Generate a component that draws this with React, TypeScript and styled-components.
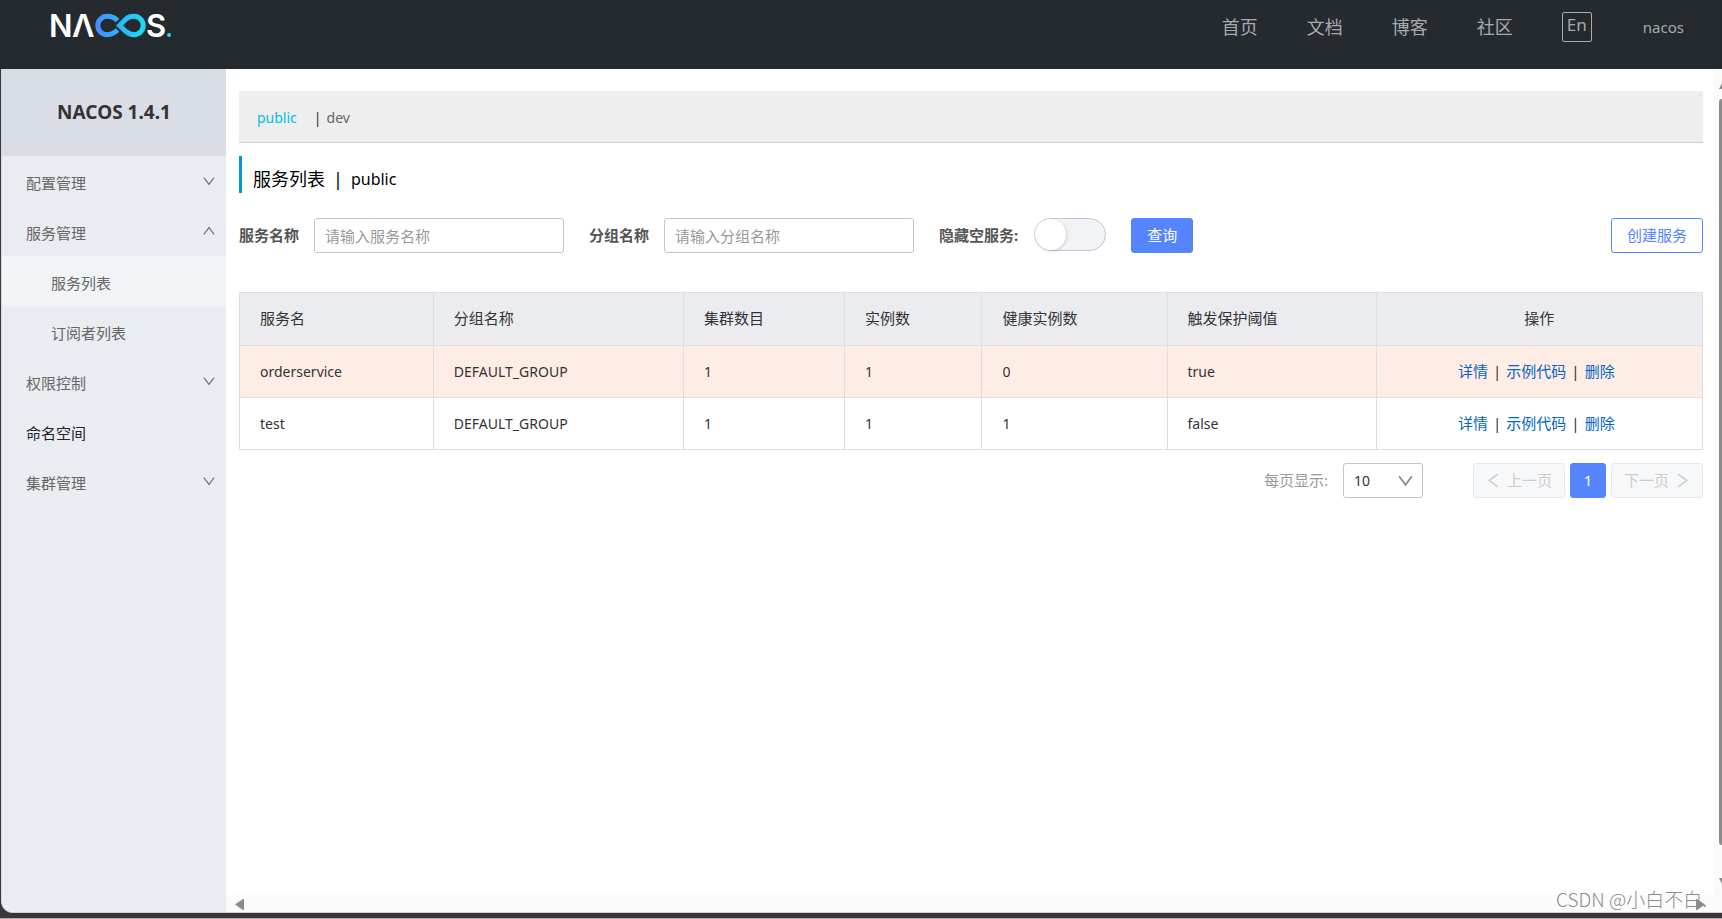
import React, { useState } from "react";
import styled, { createGlobalStyle } from "styled-components";

const GlobalStyle = createGlobalStyle`
  *, *::before, *::after { box-sizing: border-box; }
  body {
    margin: 0;
    background: #36383d;
    color: #333;
    font-family: "Noto Sans", "Noto Sans CJK SC", sans-serif;
    font-size: 15px;
    line-height: 20px;
  }
  button, input, select { font: inherit; }
  a { text-decoration: none; }
`;

const Page = styled.div`
  position: relative;
  display: flex;
  flex-direction: column;
  min-height: 100vh;
  padding-bottom: 5px;
  border-bottom: 1px solid #b5aaa9;
`;

const Header = styled.header`
  display: flex;
  justify-content: space-between;
  align-items: flex-start;
  height: 69px;
  padding: 4px 38px 0 48px;
  background: #252a2f;
`;

const LogoLink = styled.a`
  display: block;
  height: 44px;
`;

const TopNav = styled.nav`
  display: flex;
  align-items: center;
  gap: 49px;
  height: 30px;
  margin-top: 8px;
  font-size: 18px;
`;

const TopLink = styled.a`
  color: #a8aaac;
`;

const UserLink = styled(TopLink)`
  margin-left: 2px;
  font-size: 15px;
`;

const LanguageButton = styled.button`
  width: 30px;
  height: 30px;
  padding: 0 0 4px;
  border: 1px solid #a8aaac;
  border-radius: 2px;
  background: transparent;
  color: #a8aaac;
  font-size: 17px;
  line-height: 24px;
`;

const Body = styled.div`
  display: flex;
  flex: 1;
  margin-left: 1px;
  border-left: 1px solid #d5d8dc;
  border-bottom: 1px solid #cfcfd2;
  border-bottom-left-radius: 12px;
  background: #fff;
  overflow: hidden;
`;

const Sidebar = styled.aside`
  flex: 0 0 224px;
  background: #e9edf2;
`;

const Version = styled.h1`
  height: 87px;
  margin: 0;
  background: #d9dde5;
  font-size: 19px;
  line-height: 86px;
  text-align: center;
`;

const Menu = styled.ul`
  margin: 0;
  padding: 0;
  list-style: none;
`;

const menuEntry = `
  display: flex;
  align-items: center;
  justify-content: space-between;
  width: 100%;
  height: 50px;
  border: 0;
  text-align: left;
`;

const MenuButton = styled.button`
  ${menuEntry}
  padding: 4px 11px 0 24px;
  background: transparent;
  color: #666;

  svg { margin-bottom: 4px; }
`;

const MenuLink = styled.a<{ $nested?: boolean; $active?: boolean }>`
  ${menuEntry}
  padding: 4px 12px 0 ${(p) => (p.$nested ? 49 : 24)}px;
  background: ${(p) => (p.$active ? "#f1f3f7" : "transparent")};
  color: ${(p) => (p.$nested ? "#666" : "#222")};
`;

const Main = styled.main`
  display: flex;
  flex-direction: column;
  flex: 1;
  min-width: 0;
`;

const Content = styled.div`
  flex: 1;
  padding: 22px 11px 0 13px;
`;

const NamespaceBar = styled.div`
  display: flex;
  align-items: center;
  height: 52px;
  padding: 3px 18px 0;
  border-bottom: 1px solid #ccc;
  background: #eee;
  font-size: 14px;
`;

const NamespaceButton = styled.button<{ $active?: boolean }>`
  padding: 0;
  border: 0;
  background: transparent;
  color: ${(p) => (p.$active ? "#00c1de" : "#666")};
`;

const Divider = styled.span<{ $before: number; $after: number }>`
  margin-left: ${(p) => p.$before}px;
  margin-right: ${(p) => p.$after}px;
`;

const PageTitle = styled.h2`
  display: flex;
  align-items: center;
  height: 37px;
  margin: 13px 0 25px;
  padding: 9px 0 0 11px;
  border-left: 3px solid #09c;
  color: #000;
  font-size: 18px;
  font-weight: 400;
`;

const TitleScope = styled.span`
  font-size: 16px;
`;

const Filters = styled.form`
  display: flex;
  align-items: center;
  height: 35px;
`;

const FieldLabel = styled.label`
  margin-right: 15px;
  padding-bottom: 2px;
  color: #555;
  font-weight: 700;
`;

const TextInput = styled.input`
  width: 250px;
  height: 35px;
  margin-right: 25px;
  padding: 0 10px;
  border: 1px solid #c4c6cf;
  border-radius: 3px;
  background: #fff;
  color: #333;

  &::placeholder { color: #999; opacity: 1; }
`;

const Switch = styled.input`
  appearance: none;
  width: 72px;
  height: 33px;
  margin: 0 25px 2px 1px;
  border: 1px solid #c4c6cf;
  border-radius: 17px;
  background: #f2f3f7;

  &::before {
    content: "";
    display: block;
    width: 31px;
    height: 31px;
    border-radius: 50%;
    background: #fff;
    box-shadow: 1px 1px 3px rgba(0, 0, 0, 0.15);
  }

  &:checked { background: #5584ff; }
  &:checked::before { margin-left: 39px; }
`;

const ActionButton = styled.button<{ $outlined?: boolean }>`
  height: 35px;
  margin-left: ${(p) => (p.$outlined ? "auto" : "0")};
  padding: 0 15px 1px;
  border: 1px solid #5584ff;
  border-radius: 3px;
  background: ${(p) => (p.$outlined ? "#fff" : "#5584ff")};
  color: ${(p) => (p.$outlined ? "#5584ff" : "#fff")};
`;

const ServiceTable = styled.table`
  width: 100%;
  margin-top: 39px;
  border-collapse: collapse;
  table-layout: fixed;
`;

const Column = styled.col<{ $share?: number }>`
  width: ${(p) => (p.$share ? `${p.$share}%` : "auto")};
`;

const HeadCell = styled.th<{ $centered?: boolean }>`
  height: 53px;
  padding: 0 20px 2px;
  border: 1px solid #dcdee3;
  background: #ebecf0;
  font-weight: 400;
  text-align: ${(p) => (p.$centered ? "center" : "left")};
`;

const ServiceRow = styled.tr<{ $warning?: boolean }>`
  background: ${(p) => (p.$warning ? "#ffece4" : "#fff")};
`;

const Cell = styled.td`
  height: 52px;
  padding: 0 20px;
  border: 1px solid #dcdee3;
  font-size: 14px;
`;

const ActionCell = styled(Cell)`
  padding: 0 26px 2px 20px;
  font-size: 15px;
  text-align: center;
`;

const RowLink = styled.a`
  color: #06c;
`;

const RowDivider = styled.span`
  margin: 0 5px;
`;

const Footer = styled.div`
  display: flex;
  justify-content: flex-end;
  align-items: center;
  margin-top: 13px;
`;

const SizeLabel = styled.label`
  margin-right: 15px;
  padding-bottom: 1px;
  color: #999;
`;

const SelectBox = styled.div`
  display: grid;
  align-items: center;
  margin-right: 50px;

  > * { grid-area: 1 / 1; }
  svg { justify-self: end; margin-right: 10px; pointer-events: none; }
`;

const SizeSelect = styled.select`
  appearance: none;
  width: 80px;
  height: 35px;
  padding: 0 10px;
  border: 1px solid #c4c6cf;
  border-radius: 3px;
  background: #fff;
  color: #333;
  font-size: 14px;
`;

const Pager = styled.nav`
  display: flex;
  gap: 5px;
`;

const PageButton = styled.button<{ $current?: boolean }>`
  display: flex;
  align-items: center;
  justify-content: center;
  gap: 6px;
  width: ${(p) => (p.$current ? 36 : 92)}px;
  height: 35px;
  padding: 0 0 1px;
  border: 1px solid ${(p) => (p.$current ? "#5584ff" : "#e6e7eb")};
  border-radius: 3px;
  background: ${(p) => (p.$current ? "#5584ff" : "#f7f8fa")};
  color: ${(p) => (p.$current ? "#fff" : "#ccc")};
`;

const HorizontalTrack = styled.div`
  display: flex;
  align-items: center;
  justify-content: space-between;
  height: 17px;
  padding: 2px 9px 0;
  background: #fbfbfb;
`;

const VerticalTrack = styled.div`
  display: flex;
  flex-direction: column;
  align-items: flex-end;
  flex: 0 0 8px;
  padding: 14px 0 28px;
  background: #fafafa;
`;

const VerticalThumb = styled.div`
  flex: 1;
  width: 3px;
  margin: 10px 0 33px;
  border-radius: 3px 0 0 3px;
  background: #8b8b8b;
`;

const Watermark = styled.div`
  position: absolute;
  right: 15px;
  bottom: 6px;
  color: #8a8b8e;
  font-family: "Noto Sans CJK SC", sans-serif;
  font-size: 19px;
  font-weight: 300;
  line-height: 26px;
`;

function Logo() {
  return (
    <svg width="126" height="44" viewBox="-2 -8 126 44" role="img" aria-label="NACOS">
      <defs>
        <linearGradient id="loop" gradientUnits="userSpaceOnUse" x1="46" y1="0" x2="96" y2="0">
          <stop offset="0" stopColor="#428dff" />
          <stop offset="1" stopColor="#18dff5" />
        </linearGradient>
      </defs>
      <g fill="#fff" fontFamily="Inter, sans-serif" fontSize="31" fontWeight="600">
        <text x="-1" y="25">N</text>
        <text x="22" y="25">Λ</text>
        <text x="96" y="25">S</text>
      </g>
      <g fill="none" stroke="url(#loop)" strokeWidth="5">
        <path d="M67.5 8.5C64 5 61 4.300 57 4.300A9.200 9.200 0 0 0 57 22.700C61 22.700 64 21.500 67.500 18" />
        <path d="M69.500 13.500L76 7C78.500 5 81 4.300 84 4.300A9.200 9.200 0 0 1 84 22.700C81 22.700 78.500 21.500 76 19.500Z" />
      </g>
      <circle cx="119" cy="23" r="2" fill="#18dff5" />
    </svg>
  );
}

type Direction = "up" | "down" | "left" | "right";

const chevrons: Record<Direction, string> = {
  down: "M1 3L7 11L13 3",
  up: "M1 11L7 3L13 11",
  left: "M11 1L3 7L11 13",
  right: "M3 1L11 7L3 13",
};

function Chevron({ direction, size, color }: { direction: Direction; size: number; color: string }) {
  return (
    <svg width={size} height={size} viewBox="0 0 14 14" aria-hidden="true">
      <path d={chevrons[direction]} fill="none" stroke={color} strokeWidth="1.5" />
    </svg>
  );
}

function ScrollArrow({ width, height, points }: { width: number; height: number; points: string }) {
  return (
    <svg width={width} height={height} viewBox={`0 0 ${width} ${height}`} aria-hidden="true">
      <polygon points={points} fill="#8b8b8b" />
    </svg>
  );
}

const topLinks = ["首页", "文档", "博客", "社区"];

const columns = [
  { title: "服务名", share: 13.25 },
  { title: "分组名称", share: 17.1 },
  { title: "集群数目", share: 11 },
  { title: "实例数", share: 9.4 },
  { title: "健康实例数", share: 12.65 },
  { title: "触发保护阈值", share: 14.3 },
];

const services = [
  { name: "orderservice", group: "DEFAULT_GROUP", clusters: 1, instances: 1, healthy: 0, triggered: true },
  { name: "test", group: "DEFAULT_GROUP", clusters: 1, instances: 1, healthy: 1, triggered: false },
];

function MenuGroup({ title, open = false, children }: { title: string; open?: boolean; children?: React.ReactNode }) {
  return (
    <li>
      <MenuButton type="button" aria-expanded={open}>
        {title}
        <Chevron direction={open ? "up" : "down"} size={12} color="#777" />
      </MenuButton>
      {open && <Menu>{children}</Menu>}
    </li>
  );
}

export default function App() {
  const [hideEmpty, setHideEmpty] = useState(false);

  return (
    <>
      <GlobalStyle />
      <Page lang="zh-CN">
        <Header>
          <LogoLink href="#"><Logo /></LogoLink>
          <TopNav>
            {topLinks.map((label) => <TopLink key={label} href="#">{label}</TopLink>)}
            <LanguageButton type="button">En</LanguageButton>
            <UserLink href="#">nacos</UserLink>
          </TopNav>
        </Header>

        <Body>
          <Sidebar>
            <Version>NACOS 1.4.1</Version>
            <Menu>
              <MenuGroup title="配置管理" />
              <MenuGroup title="服务管理" open>
                <li><MenuLink href="#" $nested $active>服务列表</MenuLink></li>
                <li><MenuLink href="#" $nested>订阅者列表</MenuLink></li>
              </MenuGroup>
              <MenuGroup title="权限控制" />
              <li><MenuLink href="#">命名空间</MenuLink></li>
              <MenuGroup title="集群管理" />
            </Menu>
          </Sidebar>

          <Main>
            <Content>
              <NamespaceBar>
                <NamespaceButton type="button" $active>public</NamespaceButton>
                <Divider $before={17} $after={5}>|</Divider>
                <NamespaceButton type="button">dev</NamespaceButton>
              </NamespaceBar>

              <PageTitle>
                服务列表
                <Divider $before={8} $after={8}>|</Divider>
                <TitleScope>public</TitleScope>
              </PageTitle>

              <Filters onSubmit={(e) => e.preventDefault()}>
                <FieldLabel htmlFor="service">服务名称</FieldLabel>
                <TextInput id="service" placeholder="请输入服务名称" />
                <FieldLabel htmlFor="group">分组名称</FieldLabel>
                <TextInput id="group" placeholder="请输入分组名称" />
                <FieldLabel htmlFor="hide-empty">隐藏空服务:</FieldLabel>
                <Switch
                  id="hide-empty"
                  type="checkbox"
                  role="switch"
                  checked={hideEmpty}
                  onChange={(e) => setHideEmpty(e.target.checked)}
                />
                <ActionButton type="submit">查询</ActionButton>
                <ActionButton type="button" $outlined>创建服务</ActionButton>
              </Filters>

              <ServiceTable>
                <colgroup>
                  {columns.map((c) => <Column key={c.title} $share={c.share} />)}
                  <Column />
                </colgroup>
                <thead>
                  <tr>
                    {columns.map((c) => <HeadCell key={c.title} scope="col">{c.title}</HeadCell>)}
                    <HeadCell scope="col" $centered>操作</HeadCell>
                  </tr>
                </thead>
                <tbody>
                  {services.map((s) => (
                    <ServiceRow key={s.name} $warning={s.triggered}>
                      <Cell>{s.name}</Cell>
                      <Cell>{s.group}</Cell>
                      <Cell>{s.clusters}</Cell>
                      <Cell>{s.instances}</Cell>
                      <Cell>{s.healthy}</Cell>
                      <Cell>{String(s.triggered)}</Cell>
                      <ActionCell>
                        <RowLink href="#">详情</RowLink>
                        <RowDivider>|</RowDivider>
                        <RowLink href="#">示例代码</RowLink>
                        <RowDivider>|</RowDivider>
                        <RowLink href="#">删除</RowLink>
                      </ActionCell>
                    </ServiceRow>
                  ))}
                </tbody>
              </ServiceTable>

              <Footer>
                <SizeLabel htmlFor="page-size">每页显示:</SizeLabel>
                <SelectBox>
                  <SizeSelect id="page-size" defaultValue="10">
                    <option>10</option>
                    <option>20</option>
                    <option>50</option>
                  </SizeSelect>
                  <Chevron direction="down" size={15} color="#888" />
                </SelectBox>
                <Pager aria-label="分页">
                  <PageButton type="button" disabled>
                    <Chevron direction="left" size={15} color="#ccc" />上一页
                  </PageButton>
                  <PageButton type="button" $current>1</PageButton>
                  <PageButton type="button" disabled>
                    下一页<Chevron direction="right" size={15} color="#ccc" />
                  </PageButton>
                </Pager>
              </Footer>
            </Content>
            <HorizontalTrack>
              <ScrollArrow width={9} height={11} points="0,5.5 8,0 9,0 9,11 8,11" />
              <ScrollArrow width={9} height={11} points="0,0 1,0 9,5.5 1,11 0,11" />
            </HorizontalTrack>
          </Main>

          <VerticalTrack>
            <ScrollArrow width={3} height={6} points="0,6 3,0 3,6" />
            <VerticalThumb />
            <ScrollArrow width={3} height={6} points="0,0 3,0 3,6" />
          </VerticalTrack>
        </Body>
        <Watermark>CSDN @小白不白.</Watermark>
      </Page>
    </>
  );
}
